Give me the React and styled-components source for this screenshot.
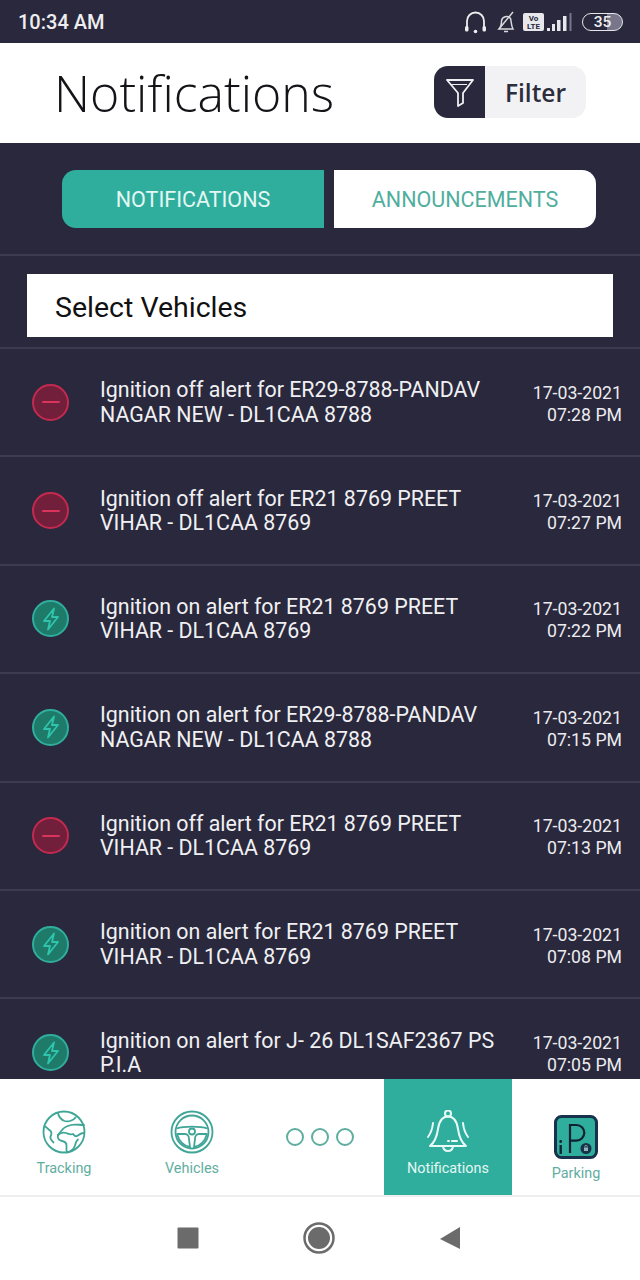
import React from 'react'
import styled, {createGlobalStyle} from 'styled-components'

const DARK = '#29283c'
const TEAL = '#2fae9e'
const TEAL_TEXT = '#5fae9f'

const GlobalStyle = createGlobalStyle`
    html, body {
        margin: 0;
        padding: 0;
        background: #fff;
    }
    * {
        box-sizing: border-box;
    }
`

const Screen = styled.div`
    width: 640px;
    height: 1280px;
    display: flex;
    flex-direction: column;
    overflow: hidden;
    font-family: Roboto, "Liberation Sans", sans-serif;
    background: ${DARK};
`

const StatusBar = styled.div`
    flex: 0 0 43px;
    display: flex;
    align-items: center;
    justify-content: space-between;
    padding: 0 17px 0 18px;
    background: ${DARK};
    color: #eeeef0;
`

const Clock = styled.span`
    font-size: 20px;
    font-weight: 500;
`

const StatusIcons = styled.div`
    display: flex;
    align-items: center;
    gap: 9px;
`

const Battery = styled.div`
    width: 41px;
    height: 18px;
    margin-left: 1px;
    border: 1.5px solid #e6e6ea;
    border-radius: 9px;
    display: flex;
    align-items: center;
    justify-content: center;
    font-size: 15.5px;
    font-weight: 500;
    background: linear-gradient(90deg, #29283c 62%, #77768a 62%);
`

const Header = styled.header`
    flex: 0 0 100px;
    display: flex;
    align-items: center;
    justify-content: space-between;
    padding: 0 54px;
    background: #fff;
`

const Title = styled.h1`
    margin: 0;
    font-family: "Open Sans", sans-serif;
    font-size: 50px;
    font-weight: 300;
    color: #141418;
`

const FilterButton = styled.button`
    width: 152px;
    height: 52px;
    margin-bottom: 2px;
    padding: 0;
    border: 0;
    border-radius: 14px;
    display: flex;
    align-items: stretch;
    overflow: hidden;
    background: #f2f2f5;
`

const FilterIcon = styled.span`
    flex: 0 0 51px;
    display: flex;
    align-items: center;
    justify-content: center;
    background: ${DARK};
`

const FilterLabel = styled.span`
    flex: 1;
    display: flex;
    align-items: center;
    justify-content: center;
    font-family: "Open Sans", sans-serif;
    font-size: 24.5px;
    font-weight: 600;
    color: #2d2d3c;
`

const Tabs = styled.div`
    flex: 0 0 113px;
    display: flex;
    align-items: flex-start;
    gap: 10px;
    padding: 27px 44px 0 62px;
    border-bottom: 2px solid #3b3b52;
`

const Tab = styled.div`
    flex: 1;
    height: 58px;
    display: flex;
    align-items: center;
    justify-content: center;
    font-size: 21.5px;
    background: ${p => p.$active ? TEAL : '#fff'};
    color: ${p => p.$active ? '#e4f7f3' : '#4fae9e'};
    border-radius: ${p => p.$active ? '14px 0 0 14px' : '0 14px 14px 0'};
`

const SelectRow = styled.div`
    flex: 0 0 93px;
    padding: 18px 27px 0;
    border-bottom: 2px solid #3b3b52;
`

const SelectBox = styled.div`
    height: 63px;
    width: 586px;
    display: flex;
    align-items: center;
    padding: 3px 0 0 28px;
    background: #fff;
    font-size: 28.5px;
    color: #111;
`

const List = styled.div`
    flex: 1;
    min-height: 0;
    overflow: hidden;
`

const Row = styled.div`
    height: 108.4px;
    display: flex;
    align-items: center;
    padding: 0 18px 0 32px;
    border-bottom: 2px solid #3b3b52;
`

const Badge = styled.span`
    flex: 0 0 37px;
    height: 37px;
    margin-right: 31px;
    border-radius: 50%;
    display: flex;
    align-items: center;
    justify-content: center;
    background: ${p => p.$on ? '#1e7a69' : '#711f3a'};
    border: 2px solid ${p => p.$on ? '#2fae9e' : '#c42a50'};
`

const Message = styled.div`
    flex: 1;
    padding-top: 1px;
    font-size: 21.4px;
    line-height: 24.5px;
    color: #f0f0f3;
`

const Stamp = styled.div`
    flex: 0 0 100px;
    padding-top: 3px;
    text-align: right;
    font-size: 17.7px;
    line-height: 22px;
    color: #ececf0;
`

const TabBar = styled.nav`
    flex: 0 0 116px;
    display: grid;
    grid-template-columns: repeat(5, 128px);
    background: #fff;
`

const NavItem = styled.div`
    display: flex;
    flex-direction: column;
    align-items: center;
    padding-top: ${p => p.$pad || 31}px;
    gap: 6px;
    font-size: 14.4px;
    background: ${p => p.$active ? TEAL : 'transparent'};
    color: ${p => p.$active ? '#e4f7f3' : TEAL_TEXT};
`

const Dots = styled.div`
    display: flex;
    gap: 7px;
    padding-top: 49px;
    justify-content: center;
`

const Dot = styled.span`
    width: 18px;
    height: 18px;
    border: 2.5px solid ${TEAL_TEXT};
    border-radius: 50%;
`

const SystemNav = styled.div`
    flex: 0 0 85px;
    display: flex;
    align-items: center;
    justify-content: center;
    gap: 104px;
    padding: 0 3px 2px 0;
    background: #fff;
    border-top: 2px solid #eeeeee;
`

const Headset = () => (
    <svg width="23" height="24" viewBox="0 0 23 24" fill="none" stroke="#eeeef0" strokeWidth="1.800">
        <path d="M3 17V11a8.500 8.500 0 0 1 17 0v6" />
        <rect x="1" y="16" width="3.500" height="5.500" rx="1.500" fill="#eeeef0" stroke="none" />
        <rect x="18.500" y="16" width="3.500" height="5.500" rx="1.500" fill="#eeeef0" stroke="none" />
        <circle cx="11.500" cy="21.500" r="1.800" fill="#eeeef0" stroke="none" />
    </svg>
)

const MutedBell = () => (
    <svg width="20" height="24" viewBox="0 0 20 24" fill="none" stroke="#d9d9de" strokeWidth="1.500">
        <path d="M3 19c2-2 2.500-4 2.500-8a5 5 0 0 1 9-2.500c.8 2 .5 7 2.500 10.500z" />
        <path d="M8 21.500h4" />
        <path d="M3 19L17 2" />
    </svg>
)

const Volte = () => (
    <svg width="21" height="18" viewBox="0 0 21 18" style={{marginLeft: -2}}>
        <rect width="21" height="18" rx="2" fill="#e8e8ec" />
        <text x="10.500" y="8" fontSize="8" fontWeight="700" textAnchor="middle" fontFamily="Roboto" fill="#29283c">Vo</text>
        <text x="10.500" y="15.800" fontSize="8" fontWeight="700" textAnchor="middle" fontFamily="Roboto" fill="#29283c">LTE</text>
    </svg>
)

const Signal = () => (
    <svg width="25" height="18" viewBox="0 0 25 18" style={{marginLeft: -6}}>
        <rect x="0" y="15" width="3" height="3" fill="#e8e8ec" />
        <rect x="5" y="11" width="3" height="7" fill="#e8e8ec" />
        <rect x="10" y="7" width="3.500" height="11" fill="#e8e8ec" />
        <rect x="16" y="3" width="3.500" height="15" fill="#e8e8ec" />
        <rect x="22.500" y="0" width="2" height="18" fill="#77768a" />
    </svg>
)

const Funnel = () => (
    <svg width="30" height="30" viewBox="0 0 30 30" fill="none" stroke="#f0f0f3" strokeWidth="1.800" strokeLinejoin="round">
        <path d="M2 3h26L18 16v10l-5 3V16z" />
        <path d="M6 7.500h16" strokeWidth="1" />
    </svg>
)

const Minus = () => (
    <svg width="18" height="4" viewBox="0 0 18 4">
        <rect y="1" width="18" height="2" rx="1" fill="#d8345c" />
    </svg>
)

const Bolt = () => (
    <svg width="18" height="24" viewBox="0 0 18 24" fill="none" stroke="#2fc4ac" strokeWidth="1.800" strokeLinejoin="round">
        <path d="M12 1.500L2 14H8L6 22.500L16 10H10z" />
    </svg>
)

const Globe = () => (
    <svg width="44" height="44" viewBox="0 0 44 44" fill="none" stroke="#3fa596" strokeWidth="1.800" strokeLinejoin="round" strokeLinecap="round">
        <circle cx="22" cy="22" r="20.500" />
        <path d="M16 3c.5 3 3 6.500 6.500 8 4 1 9-.5 11-3.500" />
        <path d="M42 15c-5 0-9-1-13 0s-7 2-9 5l-4 5" />
        <path d="M16 25c2-2 5-3 8-2s4 2 7 1c1 1 2 3 4 2s3-3 7-3" />
        <path d="M16 25c-1 3 1 5.500 4 6s4.500 1.500 4.500 4.500-.5 4.500.5 7c4-1 7-4 8-7s.5-4 3-6" />
        <path d="M2.500 16c2 1 3.500 3 5.500 4.500s1.500 4 .5 6 1 3.500 3 6" />
    </svg>
)

const Wheel = () => (
    <svg width="44" height="44" viewBox="0 0 44 44" fill="none" stroke="#3fa596" strokeWidth="1.800" strokeLinejoin="round">
        <circle cx="22" cy="22" r="20.500" />
        <circle cx="22" cy="22" r="16.500" />
        <circle cx="22" cy="21.500" r="3" />
        <path d="M6.500 18.500C14 16 30 16 37.500 18.500" />
        <path d="M7 24h8c3 0 4 3 4 5l1 8c-6-1-11-6-13-13z" />
        <path d="M37 24h-8c-3 0-4 3-4 5l-1 8c6-1 11-6 13-13z" />
    </svg>
)

const Bell = () => (
    <svg width="44" height="44" viewBox="0 0 44 44" fill="none" stroke="#eafaf6" strokeWidth="2" strokeLinecap="round" strokeLinejoin="round">
        <circle cx="22" cy="3.500" r="3" />
        <path d="M4 36c5-4 7-10 8-17 1-7 4-12.500 10-12.500S31 12 32 19c1 7 3 13 8 17z" />
        <path d="M17 36.500c1 6 9 6 10 0" />
        <path d="M7 13c-.5 5-2 10-5 14M37 13c.5 5 2 10 5 14" />
        <path d="M26 31h5M22 31h1" />
    </svg>
)

const ParkingIcon = () => (
    <svg width="44" height="44" viewBox="0 0 44 44">
        <rect x="1.500" y="1.500" width="41" height="41" rx="6" fill="#2fae9e" stroke="#17324a" strokeWidth="3" />
        <path d="M16 38V10h6.500a7.800 7.800 0 0 1 0 15.600H16" fill="none" stroke="#10222f" strokeWidth="2.200" />
        <rect x="5.500" y="30" width="2.400" height="9" fill="#10222f" />
        <circle cx="6.700" cy="26.500" r="1.400" fill="#10222f" />
        <circle cx="32" cy="33.500" r="5.500" fill="#17324a" />
        <rect x="30" y="32.500" width="4" height="3.500" fill="#8fb5b5" />
        <path d="M30.800 32.500v-1a1.200 1.200 0 0 1 2.400 0v1" fill="none" stroke="#8fb5b5" strokeWidth="0.800" />
    </svg>
)

const SystemHome = () => (
    <svg width="32" height="32" viewBox="0 0 32 32">
        <circle cx="16" cy="16" r="14.500" fill="none" stroke="#6b6b6b" strokeWidth="2.500" />
        <circle cx="16" cy="16" r="11" fill="#6b6b6b" />
    </svg>
)

const SystemSquare = () => (
    <svg width="22" height="22" viewBox="0 0 22 22">
        <rect width="21" height="21" x="0.500" y="0.500" rx="1" fill="#6b6b6b" />
    </svg>
)

const SystemBack = () => (
    <svg width="22" height="24" viewBox="0 0 22 24">
        <path d="M21 1v22L1 13z" fill="#6b6b6b" />
    </svg>
)

const alerts = [
    {on: false, text: 'Ignition off alert for ER29-8788-PANDAV NAGAR NEW - DL1CAA 8788', time: '07:28 PM'},
    {on: false, text: 'Ignition off alert for ER21 8769 PREET VIHAR - DL1CAA 8769', time: '07:27 PM'},
    {on: true, text: 'Ignition on alert for ER21 8769 PREET VIHAR - DL1CAA 8769', time: '07:22 PM'},
    {on: true, text: 'Ignition on alert for ER29-8788-PANDAV NAGAR NEW - DL1CAA 8788', time: '07:15 PM'},
    {on: false, text: 'Ignition off alert for ER21 8769 PREET VIHAR - DL1CAA 8769', time: '07:13 PM'},
    {on: true, text: 'Ignition on alert for ER21 8769 PREET VIHAR - DL1CAA 8769', time: '07:08 PM'},
    {on: true, text: 'Ignition on alert for J- 26 DL1SAF2367 PS P.I.A', time: '07:05 PM'}
]

const App = () => (
    <Screen>
        <GlobalStyle />
        <StatusBar>
            <Clock>10:34 AM</Clock>
            <StatusIcons>
                <Headset />
                <MutedBell />
                <Volte />
                <Signal />
                <Battery>35</Battery>
            </StatusIcons>
        </StatusBar>
        <Header>
            <Title>Notifications</Title>
            <FilterButton>
                <FilterIcon><Funnel /></FilterIcon>
                <FilterLabel>Filter</FilterLabel>
            </FilterButton>
        </Header>
        <Tabs>
            <Tab $active>NOTIFICATIONS</Tab>
            <Tab>ANNOUNCEMENTS</Tab>
        </Tabs>
        <SelectRow>
            <SelectBox>Select Vehicles</SelectBox>
        </SelectRow>
        <List>
            {alerts.map(alert => (
                <Row key={alert.time}>
                    <Badge $on={alert.on}>{alert.on ? <Bolt /> : <Minus />}</Badge>
                    <Message>{alert.text}</Message>
                    <Stamp>17-03-2021<br />{alert.time}</Stamp>
                </Row>
            ))}
        </List>
        <TabBar>
            <NavItem><Globe />Tracking</NavItem>
            <NavItem><Wheel />Vehicles</NavItem>
            <Dots><Dot /><Dot /><Dot /></Dots>
            <NavItem $active><Bell />Notifications</NavItem>
            <NavItem $pad={36}><ParkingIcon />Parking</NavItem>
        </TabBar>
        <SystemNav>
            <SystemSquare />
            <SystemHome />
            <SystemBack />
        </SystemNav>
    </Screen>
)

export default App
